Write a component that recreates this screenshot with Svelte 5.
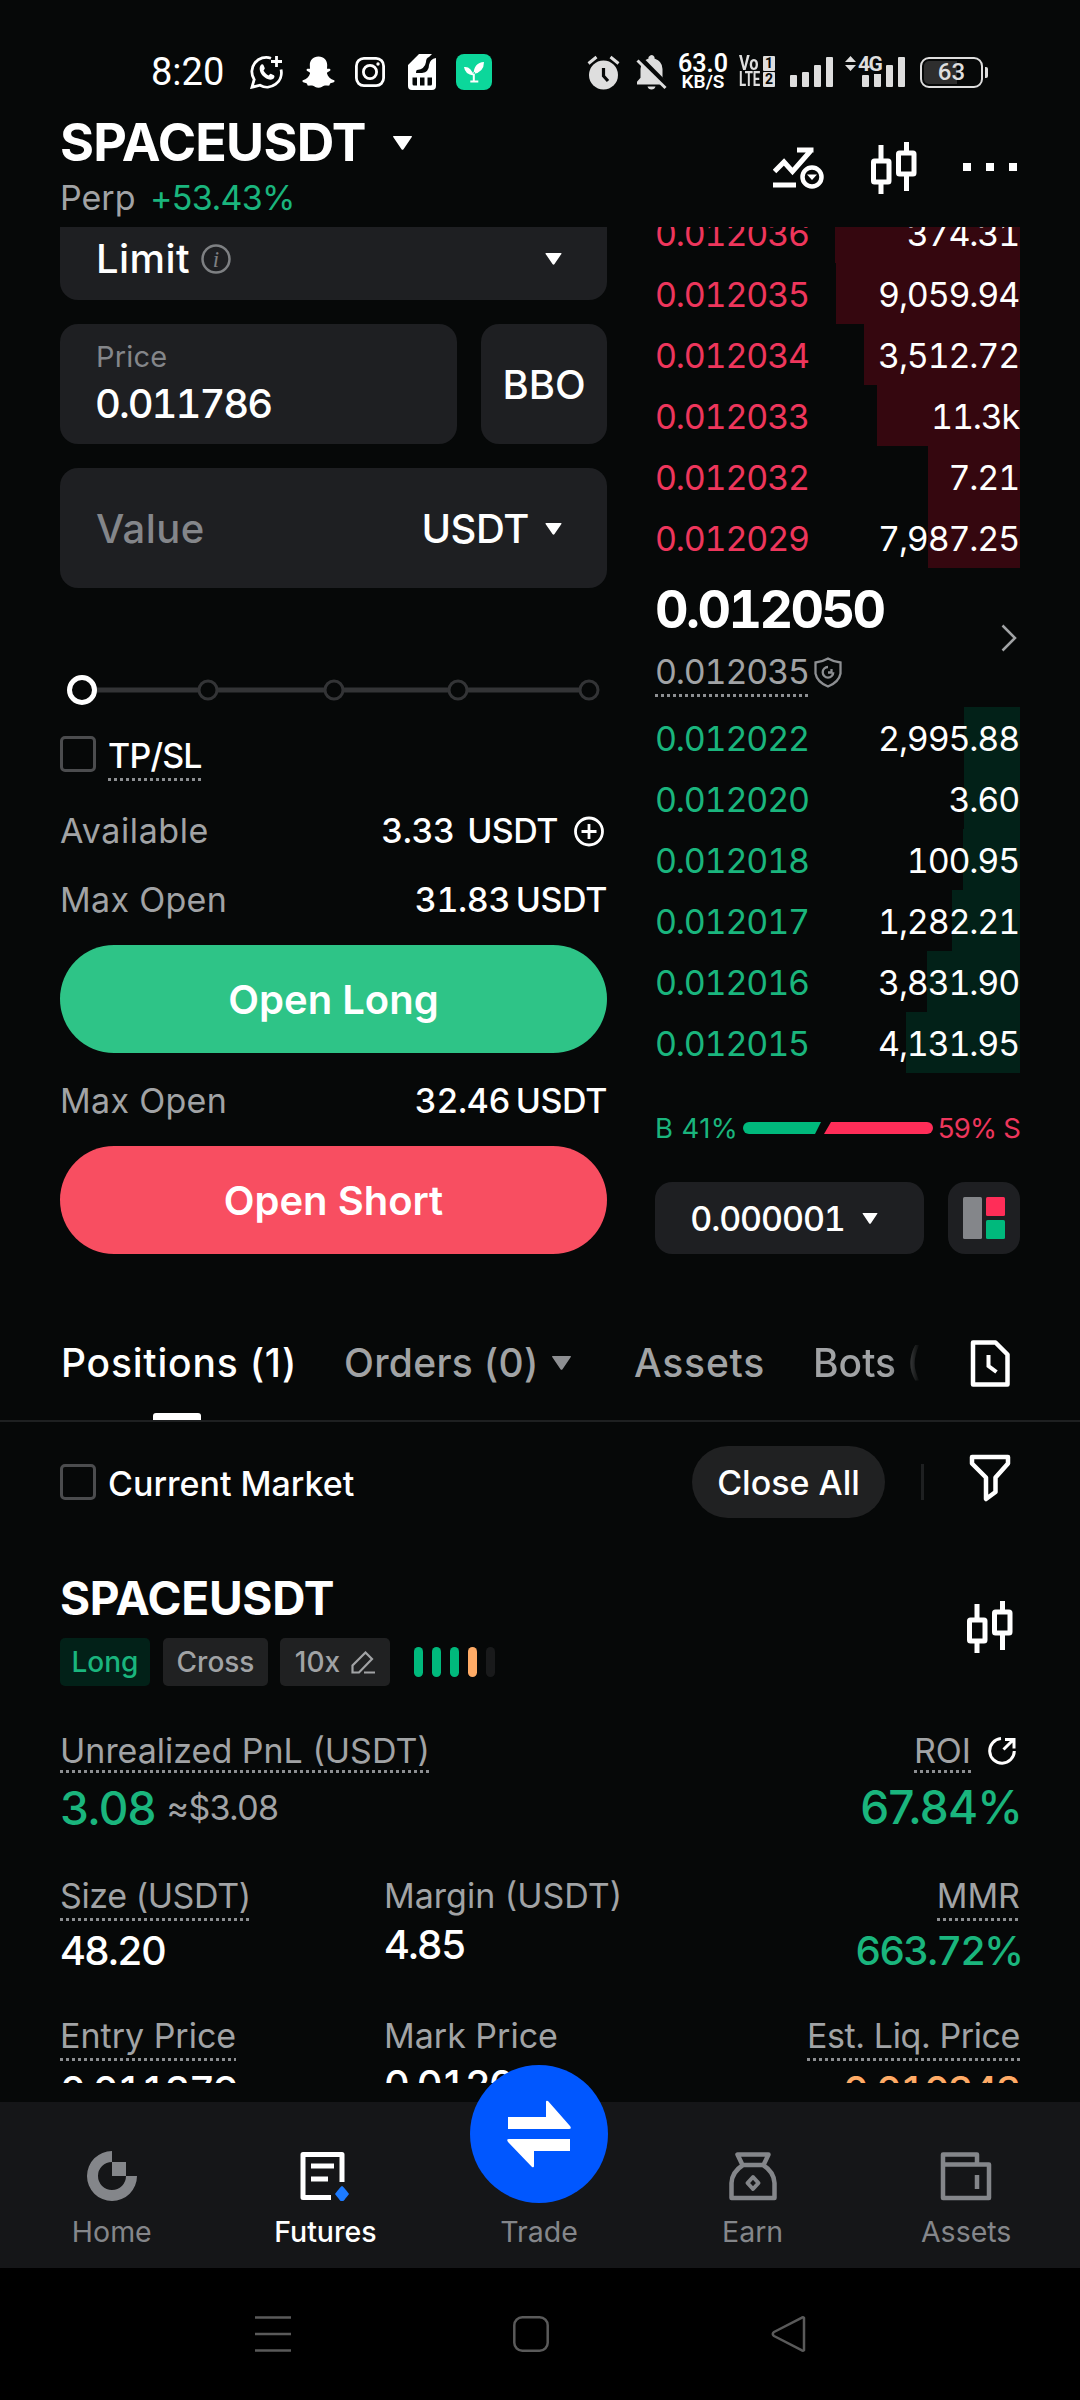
<script>
    const asks = [
        {price: "0.012036", size: "374.31", depth: 185},
        {price: "0.012035", size: "9,059.94", depth: 184},
        {price: "0.012034", size: "3,512.72", depth: 156},
        {price: "0.012033", size: "11.3k", depth: 143},
        {price: "0.012032", size: "7.21", depth: 92},
        {price: "0.012029", size: "7,987.25", depth: 92},
    ]

    const bids = [
        {price: "0.012022", size: "2,995.88", depth: 56},
        {price: "0.012020", size: "3.60", depth: 56},
        {price: "0.012018", size: "100.95", depth: 57},
        {price: "0.012017", size: "1,282.21", depth: 68},
        {price: "0.012016", size: "3,831.90", depth: 93},
        {price: "0.012015", size: "4,131.95", depth: 114},
    ]

    const signal = [12, 15, 22, 30]
    const sliderStops = [148, 274, 398, 529]
    const risk = ["ok", "ok", "ok", "warn", "off"]
</script>

{#snippet candles()}
    <svg class="candles" width="46" height="52" viewBox="0 0 46 52" fill="none" stroke="#fff" stroke-width="5">
        <path d="M10 3v14M10 42v10M35.500 0v11M35.500 34v15" />
        <rect x="2.500" y="19" width="15.500" height="21" rx="1" />
        <rect x="27.500" y="11" width="15.500" height="21" rx="1" />
    </svg>
{/snippet}

{#snippet triangle(w, h, color)}
    <svg class="triangle" width={w} height={h} viewBox="0 0 20 14"><path d="M1.200 0h17.600q1.200 0 .5 1L11 13.300q-1 1-2 0L.7 1Q0 0 1.200 0z" fill={color} /></svg>
{/snippet}

{#snippet row(entry, side)}
    <div class="row {side}">
        <span class="depth" style={`width:${entry.depth}px`}></span>
        <span class="price">{entry.price}</span>
        <span class="size">{entry.size}</span>
    </div>
{/snippet}

{#snippet bars()}
    <span class="bars">
        {#each signal as height}
            <i style={`height:${height}px`}></i>
        {/each}
    </span>
{/snippet}

<main>
    <div class="status">
        <span class="clock">8:20</span>
        <svg class="whatsapp" width="34" height="34" viewBox="0 0 34 34" fill="none" stroke="#fff" stroke-width="2.800">
            <path d="M21 3.200A14.300 14.300 0 0 0 4.200 24.500L2 32.200l8-2A14.300 14.300 0 0 0 31 14.500" />
            <path d="M26.500 1v11M21 6.500h11" />
            <path d="M10.500 10.500c1-1.500 2.500-1.600 3.200 0l1 2.500c.4 1-.8 1.800-1.200 2.600 1.200 2.300 2.600 3.700 5 4.800.9-.5 1.600-2 2.700-1.500l2.700 1.400c1.200.7.400 3-.9 3.800-3.500 1.800-7.500-.5-10-3s-4.500-7.500-2.500-10.600z" fill="#fff" stroke="none" />
        </svg>
        <svg class="snap" width="33" height="32" viewBox="0 0 33 32" fill="#fff">
            <path d="M16.500.5c5.500 0 8.700 3.700 8.700 8.600l-.2 3.600c.8.500 1.900-.5 3 .2 1 .8.300 2-1 2.600-1 .5-2.200.8-2 1.900.8 3.300 3.600 5.900 7.100 6.800.9.500.4 1.800-1 2.400-1.200.5-2.700.6-3.200 1.300-.3.600-.3 1.500-1 1.700-1.300.3-2.900-.5-4.900.2-1.600.6-2.800 2-5.500 2s-3.900-1.400-5.500-2c-2-.7-3.600.1-4.900-.2-.7-.2-.7-1.100-1-1.700-.5-.7-2-.8-3.200-1.300-1.400-.6-1.900-1.900-1-2.400 3.500-.9 6.300-3.500 7.100-6.800.2-1.100-1-1.400-2-1.900-1.300-.6-2-1.800-1-2.600 1.100-.7 2.200.3 3-.2l-.2-3.600c0-4.900 3.200-8.600 8.700-8.600z" />
        </svg>
        <svg class="insta" width="30" height="30" viewBox="0 0 30 30" fill="none" stroke="#fff" stroke-width="2.800">
            <rect x="1.400" y="1.400" width="27.200" height="27.200" rx="7.500" />
            <circle cx="15" cy="15" r="6.600" />
            <circle cx="23" cy="7" r="1.700" fill="#fff" stroke="none" />
        </svg>
        <svg class="sim" width="28" height="36" viewBox="0 0 28 36">
            <path d="M11 0h13l-3 3q-3 1-3 5-1 7-9 8-1 0-1 3h6q7-1 7-8 1-6 7-7v28q0 4-4 4H4q-4 0-4-4V11z" fill="#fff" />
            <path d="M4.500 23.500h4.500v8H6q-1.500 0-1.500-1.500zM12 23.500h4.500v8H12zM19.500 23.500H24V30q0 1.500-1.500 1.500h-3z" fill="#060808" />
        </svg>
        <svg class="sprout" width="36" height="36" viewBox="0 0 36 36">
            <rect width="36" height="36" rx="8" fill="#0cd79b" />
            <path d="M28 8q-10 .5-10.500 12Q28 18 28 8zM8 13q7-1 9.500 8.500Q9 20.500 8 13zM16.800 18h2v8.500h3.500v2h-8v-2h2.500z" fill="#fff" />
        </svg>

        <svg class="alarm" width="33" height="35" viewBox="0 0 33 35">
            <circle cx="16.500" cy="20" r="14.500" fill="#dedede" />
            <path d="M1.500 8.500L9.500 2M31.500 8.500L23.500 2" stroke="#dedede" stroke-width="3" />
            <path d="M16.500 13v8l4.500 5" fill="none" stroke="#060808" stroke-width="3.200" />
        </svg>
        <svg class="bell" width="32" height="35" viewBox="0 0 32 35">
            <path d="M1 29.500v-2.700l3.500-4V14q0-8 8-10.600V2q3.500-4 6 0v1.400q8 2.600 8 10.600v8.800l3.500 4v2.700zM11.500 31.500h8q-.8 3-4 3t-4-3z" fill="#dedede" />
            <path d="M3 3L31.500 32" stroke="#060808" stroke-width="6.500" />
            <path d="M1.500 5.500L29.500 33" stroke="#dedede" stroke-width="3" />
        </svg>
        <span class="speed"><b>63.0</b><em>KB/S</em></span>
        <span class="volte">
            <span><b class="vo">Vo</b><i>1</i></span>
            <span><b>LTE</b><i>2</i></span>
        </span>
        {@render bars()}
        <span class="lte">
            <svg width="11" height="15" viewBox="0 0 11 15" fill="#dedede"><path d="M5.500 0L11 6H0zM5.500 15L11 9H0z" /></svg>
            <b>4G</b>
            {@render bars()}
        </span>
        <span class="battery"><b>63</b></span>
    </div>

    <header>
        <div class="pair">
            <div class="symbol"><h1>SPACEUSDT</h1>{@render triangle(21, 14, "#fff")}</div>
            <p>Perp <span>+53.43%</span></p>
        </div>
        <svg class="indicator" width="52" height="42" viewBox="0 0 52 42" fill="none" stroke="#fff" stroke-width="5">
            <path d="M1.500 24.500L11 15l8.500 9.500L37.500 4M24 3h16.500M0 38h23" />
            <circle cx="39" cy="30" r="9.500" stroke-width="4.500" />
            <path d="M34 27.500h10l-5 5.500z" fill="#fff" stroke="none" />
        </svg>
        {@render candles()}
        <div class="dots"><i></i><i></i><i></i></div>
    </header>

    <section class="trade">
        <div class="form">
            <div class="field type">
                <span>Limit</span>
                <svg width="30" height="30" viewBox="0 0 30 30">
                    <circle cx="15" cy="15" r="13.500" fill="none" stroke="#7e8083" stroke-width="2.500" />
                    <text x="15" y="22.500" text-anchor="middle">i</text>
                </svg>
                {@render triangle(17, 12, "#fff")}
            </div>
            <div class="split">
                <div class="field amount">
                    <label for="price">Price</label>
                    <span id="price" class="num">0.011786</span>
                </div>
                <div class="field bbo">BBO</div>
            </div>
            <div class="field value">
                <span class="placeholder">Value</span>
                <span class="unit">USDT</span>
                {@render triangle(17, 12, "#fff")}
            </div>
            <svg class="slider" width="547" height="30" viewBox="0 0 547 30">
                <path d="M36 15h493" stroke="#333436" stroke-width="5" />
                {#each sliderStops as x}
                    <circle cx={x} cy="15" r="9" fill="#060808" stroke="#333436" stroke-width="3" />
                {/each}
                <circle cx="22" cy="15" r="12.500" fill="#060808" stroke="#fff" stroke-width="5" />
            </svg>
            <div class="check tpsl"><i></i><span class="dotted">TP/SL</span></div>
            <div class="info available">
                <span>Available</span>
                <b class="avail">3.33 USDT</b>
                <svg width="30" height="31" viewBox="0 0 30 31" fill="none" stroke="#fff" stroke-width="2.800">
                    <circle cx="15" cy="15.500" r="13.500" />
                    <path d="M7.500 15.500h15M15 8v15" />
                </svg>
            </div>
            <div class="info"><span>Max Open</span><b>31.83 USDT</b></div>
            <button class="long">Open Long</button>
            <div class="info second"><span>Max Open</span><b>32.46 USDT</b></div>
            <button class="short">Open Short</button>
        </div>

        <div class="book">
            {#each asks as entry}
                {@render row(entry, "ask")}
            {/each}
            <div class="last">
                <div>
                    <strong>0.012050</strong>
                    <p>
                        <span class="dotted">0.012035</span>
                        <svg width="28" height="31" viewBox="0 0 28 31" fill="none" stroke="#8d8f92" stroke-width="2.300">
                            <path d="M14 1.500q6 3.500 12.500 4v11q-1.500 8.500-12.500 13Q3 25 1.500 16.500v-11Q8 5 14 1.500z" />
                            <path d="M14 10a5.300 5.300 0 1 0 5.300 5.300" />
                            <path d="M14 15.500h3.500V12" />
                        </svg>
                    </p>
                </div>
                <svg class="chevron" width="16" height="28" viewBox="0 0 16 28" fill="none" stroke="#a1a3a5" stroke-width="2.500"><path d="M1.500 1.500L14 14 1.500 26.500" /></svg>
            </div>
            {#each bids as entry}
                {@render row(entry, "bid")}
            {/each}
            <div class="ratio">
                <span class="buy">B 41%</span>
                <svg width="190" height="12" viewBox="0 0 190 12">
                    <path d="M6 0h72l-6 12H6A6 6 0 0 1 6 0z" fill="#00b97c" />
                    <path d="M88 0h96a6 6 0 0 1 0 12H81z" fill="#ff2d58" />
                </svg>
                <span class="sell">59% S</span>
            </div>
            <div class="precision">
                <div class="tick">0.000001 {@render triangle(16, 11, "#fff")}</div>
                <div class="layout">
                    <svg width="42" height="42" viewBox="0 0 42 42">
                        <rect width="19" height="42" rx="1.500" fill="#84868a" />
                        <rect x="23" width="19" height="19" rx="1.500" fill="#ff2d58" />
                        <rect x="23" y="23" width="19" height="19" rx="1.500" fill="#00b97c" />
                    </svg>
                </div>
            </div>
        </div>
    </section>

    <nav class="tabs">
        <span class="active">Positions (1)</span>
        <span class="orders">Orders (0) {@render triangle(21, 14, "#8d8f92")}</span>
        <span class="assets">Assets</span>
        <span class="bots">Bots (0)</span>
        <svg width="40" height="47" viewBox="0 0 40 47" fill="none" stroke="#fff" stroke-width="4.500">
            <path d="M3 2.500h22.500L37.500 14.500V44.500H3z" stroke-linejoin="round" />
            <path d="M18.500 15v11l8 6" stroke-width="4" />
        </svg>
    </nav>

    <div class="filter">
        <div class="check"><i></i><span>Current Market</span></div>
        <div class="close">Close All</div>
        <i class="divider"></i>
        <svg width="42" height="48" viewBox="0 0 42 48" fill="none" stroke="#fff" stroke-width="4.500" stroke-linejoin="round">
            <path d="M3 3h36v6.500L26.500 23.500V38L17 45V23.500L3 9.500z" />
        </svg>
    </div>

    <section class="position">
        <div class="top">
            <div>
                <h2>SPACEUSDT</h2>
                <div class="tags">
                    <span class="tag side">Long</span>
                    <span class="tag mode">Cross</span>
                    <span class="tag leverage">10x
                        <svg width="24" height="23" viewBox="0 0 24 23" fill="none" stroke="#a1a3a5" stroke-width="2.200">
                            <path d="M1.500 21.500v-7L14.500 1.500l6.500 6.500L8 21.500zM13 21.500h11" />
                        </svg>
                    </span>
                    <span class="risk">
                        {#each risk as level}
                            <i class={level}></i>
                        {/each}
                    </span>
                </div>
            </div>
            {@render candles()}
        </div>

        <div class="pnl">
            <div>
                <span class="label dotted">Unrealized PnL (USDT)</span>
                <p><b>3.08</b> <span class="approx">≈$3.08</span></p>
            </div>
            <div class="right">
                <div class="roi">
                    <span class="label dotted">ROI</span>
                    <svg width="28" height="28" viewBox="0 0 28 28" fill="none" stroke="#fff" stroke-width="3">
                        <path d="M13 1.600A12.300 12.300 0 1 0 26.300 14M15.500 12.500L25 3M17 2.500h9v9" />
                    </svg>
                </div>
                <p><b>67.84%</b></p>
            </div>
        </div>

        <div class="grid">
            <div class="cell"><span class="label dotted tight">Size (USDT)</span><b>48.20</b></div>
            <div class="cell"><span class="label">Margin (USDT)</span><b>4.85</b></div>
            <div class="cell right"><span class="label dotted">MMR</span><b class="green">663.72%</b></div>
            <div class="cell"><span class="label dotted">Entry Price</span><b>0.011379</b></div>
            <div class="cell"><span class="label">Mark Price</span><b>0.012035</b></div>
            <div class="cell right"><span class="label dotted tight">Est. Liq. Price</span><b class="orange">0.010343</b></div>
        </div>
    </section>

    <nav class="bottom">
        <div class="item">
            <svg width="50" height="50" viewBox="0 0 50 50" fill="#84868a">
                <path d="M25 0v11a14 14 0 1 0 14 14h11A25 25 0 1 1 25 0z" />
                <path d="M25 11h14v14H25z" />
            </svg>
            <span>Home</span>
        </div>
        <div class="item current">
            <svg width="50" height="50" viewBox="0 0 50 50" fill="none" stroke="#fff" stroke-width="5">
                <path d="M42 31V3.500H3V46.500h28" stroke-linejoin="round" />
                <path d="M11 15h23M11 28h17" />
                <path d="M42 35q1 0 7 8-6 8-7 8t-7-8q6-8 7-8z" fill="#1d7bff" stroke="none" />
            </svg>
            <span>Futures</span>
        </div>
        <div class="item">
            <div class="swap">
                <svg width="66" height="68" viewBox="0 0 66 68" fill="#fff">
                    <path d="M2 17h38V2q0-2 2-1l22 25q2 3-1 3H2zM64 51H28v15q0 2-2 1L2 42q-2-3 1-3h61z" />
                </svg>
            </div>
            <span>Trade</span>
        </div>
        <div class="item">
            <svg width="48" height="50" viewBox="0 0 48 50" fill="none" stroke="#84868a" stroke-width="4.500" stroke-linejoin="round">
                <path d="M8.500 3.500h31l-5 10.500h-21zM14 14h20q11 7 11.500 18v15h-43V32Q3 21 14 14z" />
                <path d="M24 26l5.500 6-5.500 6-5.500-6z" stroke-width="4" />
            </svg>
            <span>Earn</span>
        </div>
        <div class="item">
            <svg width="52" height="50" viewBox="0 0 52 50" fill="none" stroke="#84868a" stroke-width="4.500" stroke-linejoin="round">
                <path d="M3 13.500V3.500h34v10M3 13.500h46v33.500H3z" />
                <path d="M37 24v14" />
            </svg>
            <span>Assets</span>
        </div>
    </nav>

    <div class="system">
        <svg width="36" height="36" viewBox="0 0 36 36" stroke="#5a5a5a" stroke-width="2.500"><path d="M0 1.500h36M0 18h36M0 34.500h36" /></svg>
        <svg width="36" height="36" viewBox="0 0 36 36" fill="none" stroke="#5a5a5a" stroke-width="2.500"><rect x="1.300" y="1.300" width="33.400" height="33.400" rx="8" /></svg>
        <svg width="36" height="36" viewBox="0 0 36 36" fill="none" stroke="#5a5a5a" stroke-width="2.500" stroke-linejoin="round"><path d="M34 1.800v32.400q-1 1-2.500 0L4 20q-2.500-2 0-4L31.500 1.800q1.500-1 2.500 0z" /></svg>
    </div>
</main>

<style>
    :global(body) {
        margin: 0;
        background-color: #060808;
    }

    main {
        width: 1080px;
        height: 2400px;
        overflow: hidden;
        display: flex;
        flex-direction: column;
        background-color: #060808;
        color: #fff;
        font-family: Inter, "Liberation Sans", sans-serif;
        font-size: 34px;
        line-height: 40px;
    }

    main * {
        box-sizing: border-box;
    }

    h1, h2, p {
        margin: 0;
    }

    b, em, i {
        font-style: normal;
    }

    svg {
        display: block;
        flex-shrink: 0;
    }

    .status {
        height: 99px;
        padding: 45px 0 0 151px;
        display: flex;
        align-items: center;
        font-family: Roboto, sans-serif;
        flex-shrink: 0;
    }

    .clock {
        width: 99px;
        font-size: 38px;
        font-weight: 450;
    }

    .whatsapp { margin-right: 18px; }
    .snap { margin-right: 20px; }
    .insta { margin-right: 23px; }
    .sim { margin-right: 20px; }
    .sprout { margin-right: 95px; }
    .alarm { margin-right: 16px; }
    .bell { margin-right: 10px; }

    .speed {
        width: 50px;
        display: flex;
        flex-direction: column;
        align-items: center;
        line-height: 17px;
    }

    .speed b {
        font-size: 25px;
        font-weight: 600;
        line-height: 19px;
    }

    .speed em {
        font-size: 19px;
        font-weight: 600;
    }

    .volte {
        width: 36px;
        margin: 0 15px 0 11px;
        color: #dedede;
    }

    .volte span {
        display: flex;
        justify-content: space-between;
        height: 16px;
    }

    .volte b {
        width: 20px;
        font-size: 20px;
        font-weight: 700;
        line-height: 15px;
        transform: scaleX(0.66);
        transform-origin: left;
    }

    .volte .vo {
        transform: scaleX(0.82);
    }

    .volte i {
        width: 12px;
        height: 15px;
        border-radius: 1px;
        background-color: #dedede;
        color: #060808;
        font-size: 14px;
        font-weight: 700;
        line-height: 15px;
        text-align: center;
    }

    .bars {
        width: 43px;
        height: 30px;
        display: flex;
        justify-content: space-between;
        align-items: flex-end;
    }

    .bars i {
        width: 6.500px;
        border-radius: 1px;
        background-color: #dedede;
    }

    .lte {
        position: relative;
        width: 60px;
        margin: 0 15px 0 12px;
        display: flex;
        justify-content: flex-end;
    }

    .lte svg {
        position: absolute;
        left: 0;
        top: -1px;
    }

    .lte b {
        position: absolute;
        left: 13px;
        top: -3px;
        font-size: 21px;
        line-height: 20px;
        color: #dedede;
        letter-spacing: -1.500px;
        background-color: #060808;
    }

    .battery {
        position: relative;
        width: 63px;
        height: 31px;
        border: 2.500px solid #dedede;
        border-radius: 9px;
        background: linear-gradient(90deg, #2e2e2e 60%, transparent 60%) content-box;
        padding: 2px;
    }

    .battery b {
        position: absolute;
        inset: 0;
        text-align: center;
        color: #dedede;
        font-size: 24px;
        font-weight: 500;
        line-height: 27px;
    }

    .battery::after {
        content: "";
        position: absolute;
        right: -7px;
        top: 8px;
        width: 3px;
        height: 11px;
        border-radius: 0 2px 2px 0;
        background-color: #dedede;
    }

    header {
        height: 128px;
        padding: 13px 63px 0 60px;
        display: flex;
        flex-shrink: 0;
    }

    .pair {
        flex: 1;
    }

    .symbol {
        display: flex;
        align-items: center;
        gap: 26px;
        height: 62px;
    }

    h1 {
        font-size: 52px;
        font-weight: 650;
        line-height: 62px;
        letter-spacing: -0.8px;
    }

    .pair p {
        margin-top: 4px;
        color: #a1a3a5;
    }

    .pair p span {
        color: #1ab57d;
        margin-left: 5px;
        letter-spacing: -0.7px;
    }

    .indicator {
        margin: 35px 46px 0 0;
    }

    header .candles {
        margin-top: 30px;
    }

    .dots {
        display: flex;
        gap: 15px;
        margin: 51px 0 0 46px;
    }

    .dots i {
        width: 8px;
        height: 8px;
        background-color: #fff;
    }

    .trade {
        height: 1027px;
        padding: 0 60px;
        display: flex;
        justify-content: space-between;
        overflow: hidden;
        flex-shrink: 0;
    }

    .form {
        width: 547px;
        margin-top: -47px;
    }

    .field {
        height: 120px;
        padding: 1px 45px 0 36px;
        border-radius: 18px;
        background-color: #1e1f22;
        display: flex;
        align-items: center;
        font-size: 40px;
        margin-bottom: 24px;
    }

    .field .triangle {
        margin-left: auto;
    }

    .type {
        padding-top: 37px;
    }

    .type span {
        margin-right: 11px;
        font-weight: 500;
        letter-spacing: 0.4px;
    }

    .type text {
        font-family: "Liberation Serif", serif;
        font-style: italic;
        font-size: 23px;
        fill: #7e8083;
    }

    .split {
        display: flex;
        gap: 24px;
    }

    .field.amount {
        flex: 1;
        flex-direction: column;
        align-items: flex-start;
        padding-top: 14px;
    }

    .amount label {
        color: #84868a;
        font-size: 29px;
        line-height: 38px;
        letter-spacing: 0.2px;
    }

    .amount span {
        margin-top: 8px;
    }

    .num {
        margin-left: -1px;
        font-weight: 500;
        font-feature-settings: "tnum";
        letter-spacing: -2px;
    }

    .field.bbo {
        width: 126px;
        padding: 1px 0 0;
        justify-content: center;
        font-weight: 500;
    }

    .field.value {
        margin-bottom: 0;
    }

    .placeholder {
        flex: 1;
        color: #84868a;
        font-weight: 450;
        letter-spacing: 0.4px;
    }

    .unit {
        margin-right: 16px;
        font-weight: 500;
        letter-spacing: -0.4px;
    }

    .value .triangle {
        margin-left: 0;
    }

    .slider {
        margin: 87px 0 31px;
    }

    .check {
        display: flex;
        align-items: center;
        gap: 12px;
    }

    .check i {
        width: 36px;
        height: 36px;
        border: 3px solid #4b4c4e;
        border-radius: 5px;
    }

    .check span {
        padding-top: 3px;
        font-weight: 450;
    }

    .tpsl {
        height: 36px;
        margin-bottom: 39px;
    }

    .check .dotted {
        letter-spacing: -0.8px;
    }

    .dotted {
        position: relative;
    }

    .dotted::after {
        content: "";
        position: absolute;
        left: 0;
        right: 0;
        bottom: -5px;
        height: 3px;
        background: repeating-linear-gradient(90deg, #8d8f92 0 3px, transparent 3px 6px);
    }

    .info {
        height: 40px;
        display: flex;
        align-items: center;
        justify-content: space-between;
        color: #a1a3a5;
        letter-spacing: 0.3px;
    }

    .info b {
        color: #fff;
        font-weight: 500;
        font-feature-settings: "tnum";
        letter-spacing: -0.4px;
        word-spacing: -3px;
    }

    .available {
        margin-bottom: 29px;
        padding-right: 3px;
        letter-spacing: 0.6px;
    }

    .info .avail {
        margin-left: auto;
        margin-right: 16px;
        letter-spacing: -0.5px;
        word-spacing: 4px;
    }

    .second {
        margin-top: 28px;
    }

    button {
        display: block;
        width: 547px;
        height: 108px;
        margin-top: 25px;
        padding: 0;
        border: 0;
        border-radius: 54px;
        color: #fff;
        font: 600 40px Inter, "Liberation Sans", sans-serif;
    }

    .long { background-color: #2ec487; }
    .short { background-color: #f84e61; }

    .book {
        width: 365px;
        margin-top: -25px;
    }

    .row {
        position: relative;
        height: 61px;
        padding: 3px 1px 0 0;
        display: flex;
        align-items: center;
        justify-content: space-between;
        font-feature-settings: "tnum";
        letter-spacing: -1.200px;
    }

    .depth {
        position: absolute;
        right: 0;
        top: 0;
        bottom: 0;
    }

    .row .price, .row .size {
        position: relative;
    }

    .ask .depth { background-color: #35070f; }
    .ask .price { color: #ee365c; }
    .bid .depth { background-color: #022118; }
    .bid .price { color: #1ab57d; }

    .last {
        height: 139px;
        padding: 15px 3px 0 0;
        display: flex;
        justify-content: space-between;
        align-items: center;
        font-feature-settings: "tnum";
    }

    .last > div {
        height: 124px;
        padding-top: 11px;
    }

    .last strong {
        display: block;
        font-size: 52px;
        font-weight: 650;
        line-height: 32px;
        letter-spacing: -2.600px;
    }

    .last p {
        display: flex;
        align-items: center;
        gap: 5px;
        margin-top: 26px;
        color: #a1a3a5;
        letter-spacing: -1.200px;
    }

    .chevron {
        margin-bottom: 14px;
    }

    .ratio {
        margin-top: 35px;
        height: 40px;
        display: flex;
        justify-content: space-between;
        align-items: center;
        font-size: 27.500px;
    }

    .buy {
        color: #1ab57d;
        letter-spacing: 0.4px;
    }

    .sell {
        color: #ee365c;
        letter-spacing: -0.8px;
    }

    .precision {
        margin-top: 34px;
        display: flex;
        justify-content: space-between;
    }

    .tick, .layout {
        height: 72px;
        border-radius: 17px;
        background-color: #1e1f22;
        display: flex;
        align-items: center;
        justify-content: center;
    }

    .tick {
        width: 269px;
        gap: 17px;
        padding: 1px 11px 0 0;
        font-weight: 500;
        font-feature-settings: "tnum";
        letter-spacing: -1.100px;
    }

    .layout {
        width: 72px;
    }

    .tabs {
        height: 168px;
        padding: 52px 70px 0 60px;
        border-bottom: 2px solid #1e2021;
        display: flex;
        align-items: center;
        color: #a1a3a5;
        font-size: 39px;
        font-weight: 500;
        white-space: nowrap;
        flex-shrink: 0;
    }

    .tabs .active {
        position: relative;
        width: 284px;
        padding-left: 1px;
        color: #fff;
        letter-spacing: 0.8px;
    }

    .active::after {
        content: "";
        position: absolute;
        left: 93px;
        bottom: -37px;
        width: 48px;
        height: 7px;
        border-radius: 3px 3px 0 0;
        background-color: #fff;
    }

    .orders {
        width: 290px;
        display: flex;
        align-items: center;
        gap: 12px;
        letter-spacing: 0.3px;
    }

    .assets {
        width: 179px;
        letter-spacing: 0.8px;
    }

    .bots {
        width: 107px;
        margin-right: 50px;
        overflow: hidden;
        mask-image: linear-gradient(90deg, #000 70%, transparent);
    }

    .filter {
        height: 72px;
        margin-top: 24px;
        padding: 0 68px 0 60px;
        display: flex;
        align-items: center;
        flex-shrink: 0;
    }

    .filter .check {
        width: 632px;
    }

    .close {
        width: 193px;
        height: 72px;
        border-radius: 36px;
        background-color: #202122;
        line-height: 74px;
        text-align: center;
        font-weight: 500;
    }

    .divider {
        width: 3px;
        height: 36px;
        margin: 0 45px 0 36px;
        background-color: #1e2021;
    }

    .filter svg {
        margin-top: -9px;
    }

    .position {
        height: 565px;
        padding: 59px 60px 0;
        overflow: hidden;
        flex-shrink: 0;
    }

    .top {
        display: flex;
        justify-content: space-between;
        padding-right: 7px;
        height: 109px;
    }

    .top .candles {
        margin-top: 24px;
    }

    h2 {
        font-size: 46px;
        font-weight: 650;
        line-height: 42px;
        letter-spacing: -0.3px;
    }

    .tags {
        display: flex;
        align-items: center;
        margin-top: 19px;
    }

    .tag {
        height: 48px;
        margin-right: 12px;
        border-radius: 5px;
        background-color: #202122;
        color: #a1a3a5;
        font-size: 28px;
        font-weight: 450;
        display: flex;
        align-items: center;
        justify-content: center;
    }

    .side {
        width: 90px;
        margin-right: 13px;
        background-color: #022118;
        color: #1ab57d;
        font-weight: 500;
    }

    .mode {
        width: 105px;
    }

    .leverage {
        width: 110px;
        gap: 11px;
    }

    .risk {
        display: flex;
        gap: 9px;
        margin-left: 12px;
    }

    .risk i {
        width: 9px;
        height: 30px;
        border-radius: 5px;
        background-color: #00b97c;
    }

    .risk .warn { background-color: #ffab66; }
    .risk .off { background-color: #191a1b; }

    .pnl {
        margin-top: 45px;
        display: flex;
        justify-content: space-between;
    }

    .label {
        display: block;
        width: fit-content;
        color: #a1a3a5;
    }

    .tight {
        letter-spacing: -0.4px;
    }

    .label.dotted::after {
        bottom: -2px;
    }

    .cell .dotted::after {
        bottom: -5px;
    }

    .pnl p {
        display: flex;
        align-items: center;
        margin-top: 13px;
        line-height: 46px;
        color: #a1a3a5;
    }

    .pnl b {
        color: #1ab57d;
        font-size: 46px;
        font-weight: 500;
        letter-spacing: -0.9px;
    }

    .pnl .right p {
        margin-right: -2px;
    }

    .approx {
        margin-left: 11px;
        padding-top: 1px;
        letter-spacing: -0.7px;
    }

    .right {
        display: flex;
        flex-direction: column;
        align-items: flex-end;
    }

    .roi {
        display: flex;
        align-items: center;
        gap: 17px;
        padding-right: 4px;
    }

    .grid {
        margin-top: 45px;
        display: grid;
        grid-template-columns: 324px 320px 1fr;
    }

    .cell {
        height: 140px;
    }

    .cell b {
        display: block;
        margin-top: 8px;
        font-size: 40px;
        font-weight: 500;
        line-height: 42px;
        font-feature-settings: "tnum";
        letter-spacing: -1.900px;
    }

    .cell .dotted + b {
        margin-top: 14px;
    }

    .cell .green {
        margin-right: -2px;
        color: #1ab57d;
    }

    .cell .orange { color: #ffab66; }

    .bottom {
        height: 166px;
        margin-top: 19px;
        padding: 0 7px 0 5px;
        display: grid;
        grid-template-columns: repeat(5, 1fr);
        background-color: #151618;
        flex-shrink: 0;
    }

    .item {
        position: relative;
        padding-top: 49px;
        display: flex;
        flex-direction: column;
        align-items: center;
        color: #84868a;
        font-size: 28.500px;
    }

    .item > span {
        margin-top: auto;
        margin-bottom: 16px;
    }

    .current {
        color: #fff;
        font-weight: 500;
    }

    .swap {
        position: absolute;
        top: -37px;
        width: 138px;
        height: 138px;
        border-radius: 50%;
        background-color: #0057ff;
        display: flex;
        align-items: center;
        justify-content: center;
    }

    .system {
        flex: 1;
        padding: 48px 274px 0 255px;
        display: flex;
        justify-content: space-between;
        background-color: #000;
    }
</style>
